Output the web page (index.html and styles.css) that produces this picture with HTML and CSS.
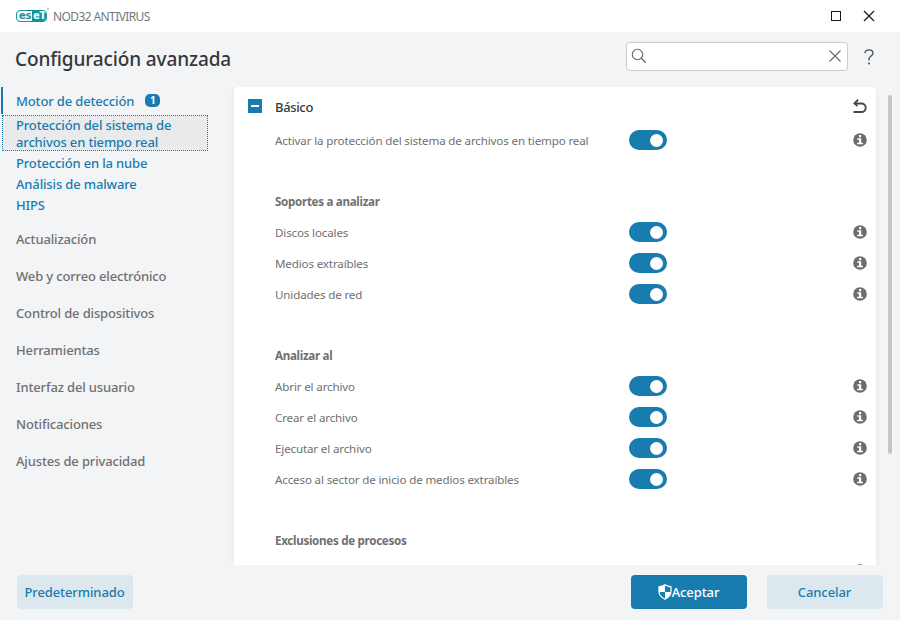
FILE: index.html
```html
<!DOCTYPE html>
<html lang="es">
<head>
  <meta charset="UTF-8">
  <title>Configuración avanzada</title>
  <link rel="stylesheet" href="styles.css">
</head>
<body>
  <svg class="defs" width="0" height="0">
    <symbol id="info" viewBox="0 0 14 14">
      <circle cx="7" cy="7" r="6.8" fill="#6d6d6d"/>
      <path d="M6 2h2.2v2.2H6zM4.3 5.2h3.9v4.6h1.7v1.5H4.1V9.8H6V6.7H4.3z" fill="#fff"/>
    </symbol>
  </svg>

  <header class="titlebar">
    <div class="logo"><span class="logo-left">es</span><span class="logo-right">eT</span></div>
    <i class="reg"></i>
    <span class="product">NOD32 ANTIVIRUS</span>
    <div class="window-buttons">
      <svg width="12" height="12" viewBox="0 0 12 12"><rect x="1.5" y="1.5" width="9" height="9" fill="none" stroke="#1d1d1d"/></svg>
      <svg width="12" height="12" viewBox="0 0 12 12"><path d="M1 1l10 10M11 1L1 11" stroke="#1d1d1d" stroke-width="1.3"/></svg>
    </div>
  </header>

  <div class="heading">
    <h1>Configuración avanzada</h1>
    <div class="search">
      <svg width="16" height="16" viewBox="0 0 16 16"><circle cx="6.5" cy="6.5" r="5.2" fill="none" stroke="#666" stroke-width="1.1"/><path d="M10.3 10.3l4.4 4.4" stroke="#666" stroke-width="1.3"/></svg>
      <svg width="12" height="12" viewBox="0 0 12 12"><path d="M.5.5l11 11M11.5.5l-11 11" stroke="#666" stroke-width="1.1"/></svg>
    </div>
    <svg class="help" width="10" height="16" viewBox="0 0 10 16"><path d="M1 4.3C1 2 2.7.9 4.9.9S9 2.2 9 4.2C9 7 5 7 5 10v1.4" fill="none" stroke="#424d56" stroke-width="1.3"/><circle cx="5" cy="14.5" r="1" fill="#424d56"/></svg>
  </div>

  <main class="content">
    <nav class="sidebar">
      <a class="item current"><span>Motor de detección</span><span class="badge">1</span></a>
      <a class="sub selected">Protección del sistema de<br>archivos en tiempo real</a>
      <a class="sub">Protección en la nube</a>
      <a class="sub">Análisis de malware</a>
      <a class="sub">HIPS</a>
      <a class="item first">Actualización</a>
      <a class="item">Web y correo electrónico</a>
      <a class="item">Control de dispositivos</a>
      <a class="item">Herramientas</a>
      <a class="item">Interfaz del usuario</a>
      <a class="item">Notificaciones</a>
      <a class="item">Ajustes de privacidad</a>
    </nav>

    <section class="panel">
      <div class="panel-head">
        <span class="collapse"></span>
        <h2>Básico</h2>
        <svg class="undo" width="14" height="15" viewBox="0 0 14 15"><path d="M2 4.5h6.3c2.6 0 4.4 1.8 4.4 4.2s-1.8 4.3-4.4 4.3H.5" fill="none" stroke="#3c4a55" stroke-width="1.9"/><path d="M5 .7L1.5 4.5 4.5 7" fill="none" stroke="#3c4a55" stroke-width="1.9"/></svg>
      </div>
      <div class="row"><span>Activar la protección del sistema de archivos en tiempo real</span><i class="toggle"></i><svg class="info"><use href="#info"/></svg></div>

      <h3>Soportes a analizar</h3>
      <div class="row"><span>Discos locales</span><i class="toggle"></i><svg class="info"><use href="#info"/></svg></div>
      <div class="row"><span>Medios extraíbles</span><i class="toggle"></i><svg class="info"><use href="#info"/></svg></div>
      <div class="row"><span>Unidades de red</span><i class="toggle"></i><svg class="info"><use href="#info"/></svg></div>

      <h3>Analizar al</h3>
      <div class="row"><span>Abrir el archivo</span><i class="toggle"></i><svg class="info"><use href="#info"/></svg></div>
      <div class="row"><span>Crear el archivo</span><i class="toggle"></i><svg class="info"><use href="#info"/></svg></div>
      <div class="row"><span>Ejecutar el archivo</span><i class="toggle"></i><svg class="info"><use href="#info"/></svg></div>
      <div class="row"><span>Acceso al sector de inicio de medios extraíbles</span><i class="toggle"></i><svg class="info"><use href="#info"/></svg></div>

      <h3>Exclusiones de procesos</h3>
      <div class="row"><span></span><svg class="info"><use href="#info"/></svg></div>
    </section>
    <div class="scrollbar"></div>
  </main>

  <footer class="footer">
    <button class="btn">Predeterminado</button>
    <button class="btn primary">
      <svg width="14" height="16" viewBox="0 0 14 16"><path d="M7 .8c1.8 1.3 3.8 1.9 6 2v4.7c0 3.5-2.4 6-6 7.7-3.6-1.7-6-4.2-6-7.7V2.8c2.2-.1 4.2-.7 6-2z" fill="none" stroke="#fff" stroke-width="1.2"/><path d="M7 .8C5.2 2.1 3.2 2.7 1 2.8V8h6zM7 8h6c-.2 3.2-2.5 5.6-6 7.2z" fill="#fff"/></svg>Aceptar
    </button>
    <button class="btn">Cancelar</button>
  </footer>
</body>
</html>
```
FILE: styles.css
```css
* {
  box-sizing: border-box;
}

body {
  margin: 0;
  width: 900px;
  height: 620px;
  overflow: hidden;
  display: flex;
  flex-direction: column;
  background-color: #f3f4f6;
  font-family: "Noto Sans", sans-serif;
  color: #707070;
}

svg {
  display: block;
  flex: none;
}

.defs {
  position: absolute;
}

h1, h2, h3 {
  margin: 0;
}

.titlebar {
  height: 32px;
  flex: none;
  display: flex;
  align-items: center;
  padding: 0 25px 0 16px;
  background-color: #fff;
}

.logo {
  width: 31px;
  height: 12px;
  display: flex;
  border: 1px solid #0f969e;
  border-radius: 4px;
  overflow: hidden;
  font: bold 10px/9px "DejaVu Sans", sans-serif;
  letter-spacing: -0.4px;
}

.logo-left {
  width: 15px;
  padding-left: 2px;
  color: #0f969e;
}

.logo-right {
  flex: 1;
  padding-left: 1px;
  background-color: #0f969e;
  color: #fff;
}

/* trademark dot next to the logo */
.reg {
  width: 2px;
  height: 2px;
  margin-bottom: 14px;
  border-radius: 1px;
  background-color: #8ccbcf;
}

.product {
  margin-left: 4px;
  font-size: 12px;
  letter-spacing: -0.6px;
  color: #74797d;
}

.window-buttons {
  margin-left: auto;
  display: flex;
  gap: 21px;
}

.heading {
  height: 55px;
  flex: none;
  display: flex;
  align-items: flex-start;
  padding: 10px 26px 0 15px;
}

h1 {
  font-size: 19px;
  line-height: 34px;
  font-weight: 500;
  letter-spacing: -0.13px;
  color: #33383c;
}

.search {
  width: 222px;
  height: 29px;
  margin-left: auto;
  display: flex;
  justify-content: space-between;
  align-items: center;
  padding: 0 6px 1px 4px;
  background-color: #fff;
  border: 1px solid #ccc;
  border-radius: 4px;
}

.help {
  margin: 7px 0 0 16px;
}

.content {
  height: 478px;
  flex: none;
  display: flex;
  overflow: hidden;
}

.sidebar {
  width: 234px;
  flex: none;
  display: flex;
  flex-direction: column;
  font-size: 13px;
  font-weight: 500;
  letter-spacing: -0.15px;
}

.item {
  height: 37px;
  line-height: 37px;
  padding-left: 16px;
}

.item.first {
  margin-top: 5px;
}

.item.current {
  height: 27px;
  line-height: 28px;
  display: flex;
  align-items: center;
  margin: 0 0 1px 1px;
  padding-left: 13px;
  border-left: 2px solid #187caf;
  color: #187caf;
}

.badge {
  width: 15px;
  height: 13px;
  margin-left: 11px;
  border-radius: 5px;
  background-color: #187caf;
  color: #fff;
  font-size: 10px;
  line-height: 13px;
  font-weight: 700;
  text-align: center;
}

.sub {
  height: 21px;
  line-height: 21px;
  padding-left: 16px;
  color: #187caf;
}

.sub.selected {
  width: 206px;
  height: 36px;
  line-height: 17px;
  margin: 0 0 2px 2px;
  padding: 1px 0 0 13px;
  border: 1px dotted #187caf;
  background-color: #e9eaeb;
}

.panel {
  width: 642px;
  flex: none;
  padding: 0 9px 0 41px;
  background-color: #fff;
  border-radius: 4px 4px 0 0;
  box-shadow: 0 2px 6px rgba(0, 0, 0, 0.06);
  font-size: 11.6px;
}

.panel-head {
  height: 38px;
  display: flex;
  align-items: center;
  margin-left: -27px;
}

.panel-head h2 {
  margin-left: 13px;
  padding-top: 2px;
  font-size: 13px;
  font-weight: 500;
  letter-spacing: -0.35px;
  color: #33383c;
}

.collapse {
  width: 14px;
  height: 14px;
  border: 6px solid #187caf;
  border-left-width: 3px;
  border-right-width: 3px;
  background-color: #fff;
}

.undo {
  margin-left: auto;
}

.row {
  height: 31px;
  line-height: 31px;
  display: flex;
  align-items: flex-start;
  letter-spacing: -0.15px;
}

.row span {
  width: 354px;
  white-space: nowrap;
}

.toggle {
  width: 38px;
  height: 20px;
  margin-top: 5px;
  padding: 4px 4px 0 21px;
  border-radius: 10px;
  background-color: #187caf;
}

.toggle::before {
  content: "";
  display: block;
  width: 13px;
  height: 13px;
  border-radius: 50%;
  background-color: #fff;
}

.info {
  width: 14px;
  height: 14px;
  margin: 8px 0 0 auto;
}

h3 {
  margin-top: 30px;
  height: 31px;
  font-size: 11.6px;
  line-height: 31px;
  font-weight: 700;
  letter-spacing: -0.3px;
}

.scrollbar {
  width: 4px;
  height: 359px;
  margin: 8px 0 0 12px;
  border-radius: 2px;
  background-color: #c4c5c7;
}

.footer {
  flex: 1;
  display: flex;
  align-items: flex-start;
  gap: 20px;
  padding: 10px 17px 0;
}

.btn {
  width: 116px;
  height: 34px;
  display: flex;
  align-items: center;
  justify-content: center;
  padding: 0 1px 0 0;
  border: none;
  border-radius: 4px;
  background-color: #dde8ee;
  color: #187caf;
  font-family: inherit;
  font-size: 13px;
  font-weight: 500;
  letter-spacing: -0.1px;
}

.btn.primary {
  margin-left: auto;
  background-color: #187caf;
  color: #fff;
}
```
